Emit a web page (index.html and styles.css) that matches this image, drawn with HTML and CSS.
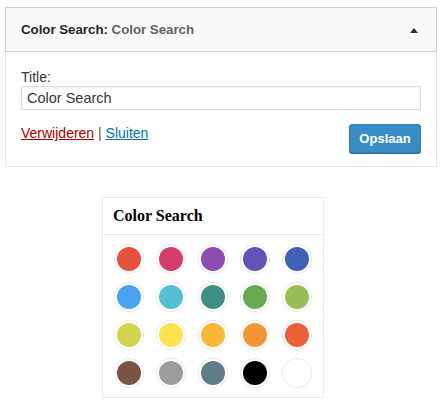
FILE: index.html
```html
<!DOCTYPE html>
<html>
<head>
<meta charset="utf-8">
<link rel="stylesheet" href="styles.css">
</head>
<body>
<div class="widget">
  <div class="widget-top">
    <h3 class="widget-title">Color Search: <span class="in-title">Color Search</span></h3>
    <svg class="toggle" width="8" height="5" viewBox="0 0 8 5"><polygon points="0,5 4,0 8,5" fill="#333"/></svg>
  </div>
  <div class="widget-inside">
    <label class="field-label">Title:</label>
    <input class="field-input" type="text" value="Color Search">
    <div class="controls">
      <div class="links"><a class="delete" href="#">Verwijderen</a> <span class="sep">|</span> <a class="close" href="#">Sluiten</a></div>
      <button class="save">Opslaan</button>
    </div>
  </div>
</div>

<div class="preview">
  <div class="preview-title">Color Search</div>
  <div class="swatches">
    <span class="swatch" style="background:#e2523f"></span>
    <span class="swatch" style="background:#d63c6a"></span>
    <span class="swatch" style="background:#8e4bb2"></span>
    <span class="swatch" style="background:#6452b6"></span>
    <span class="swatch" style="background:#4061b6"></span>
    <span class="swatch" style="background:#47a2ef"></span>
    <span class="swatch" style="background:#57bfd4"></span>
    <span class="swatch" style="background:#3f9084"></span>
    <span class="swatch" style="background:#67a852"></span>
    <span class="swatch" style="background:#9bbd55"></span>
    <span class="swatch" style="background:#d2d34e"></span>
    <span class="swatch" style="background:#fde14f"></span>
    <span class="swatch" style="background:#f5b937"></span>
    <span class="swatch" style="background:#f19535"></span>
    <span class="swatch" style="background:#ea6039"></span>
    <span class="swatch" style="background:#795446"></span>
    <span class="swatch" style="background:#9c9c9c"></span>
    <span class="swatch" style="background:#607b89"></span>
    <span class="swatch" style="background:#000000"></span>
    <span class="swatch" style="background:#ffffff"></span>
  </div>
</div>
</body>
</html>
```

FILE: styles.css
```css
* { box-sizing: border-box; }

body {
  margin: 0;
  background: #fff;
  font-family: "Liberation Sans", Arial, sans-serif;
  color: #23282d;
}

.widget {
  margin: 7px 0 0 5px;
  width: 432px;
}

.widget-top {
  height: 45px;
  background: #f9f9f9;
  border: 1px solid #cfcfcf;
  display: flex;
  align-items: center;
  justify-content: space-between;
  padding: 0 18px 0 15px;
}

.widget-title {
  margin: 0;
  font-size: 13.25px;
  font-weight: bold;
  color: #23282d;
  line-height: 20px;
}

.in-title {
  color: #5f6468;
}

.toggle {
  display: block;
  margin-top: 1px;
}

.widget-inside {
  border: 1px solid #e4e4e4;
  border-top: none;
  background: #fff;
  padding: 16px 15px 13px 15px;
}

.field-label {
  display: block;
  font-size: 14px;
  line-height: 18px;
  color: #32373c;
}

.field-input {
  display: block;
  width: 400px;
  height: 24px;
  margin: 0;
  padding: 0 5px;
  border: 1px solid #dcdcdc;
  box-shadow: inset 0 1px 2px rgba(0,0,0,0.05);
  font-family: "Liberation Sans", Arial, sans-serif;
  font-size: 14.5px;
  color: #32373c;
  background: #fff;
  outline: none;
}

.controls {
  display: flex;
  justify-content: space-between;
  align-items: flex-start;
  margin-top: 14px;
}

.links {
  font-size: 14px;
  line-height: 18px;
  color: #555;
}

.delete { color: #a00; text-decoration: underline; }
.close { color: #0073aa; text-decoration: underline; }
.sep { color: #555; }

.save {
  width: 72px;
  height: 29px;
  margin: 0;
  padding: 0 0 1px 0;
  border: 1px solid #2f7fb3;
  border-radius: 3px;
  background: #3a8dc2;
  box-shadow: 0 1px 0 #2a6d99;
  color: #fff;
  font-family: "Liberation Sans", Arial, sans-serif;
  font-size: 13px;
  font-weight: bold;
}

.preview {
  margin: 30px 0 0 102px;
  width: 222px;
  border: 1px solid #ebebeb;
  background: #fff;
}

.preview-title {
  height: 37px;
  border-bottom: 1px solid #ebebeb;
  padding: 0 10px;
  display: flex;
  align-items: center;
  font-family: "Liberation Serif", "Times New Roman", serif;
  font-weight: bold;
  font-size: 16px;
  color: #000;
}

.swatches {
  display: grid;
  grid-template-columns: repeat(5, 24px);
  justify-content: space-between;
  row-gap: 14px;
  padding: 12px 14px 12px 14px;
}

.swatch {
  display: block;
  width: 24px;
  height: 24px;
  border-radius: 50%;
  box-shadow: 0 0 0 2px #fff, 0 0 0 3px #e9e9e9;
}
```
